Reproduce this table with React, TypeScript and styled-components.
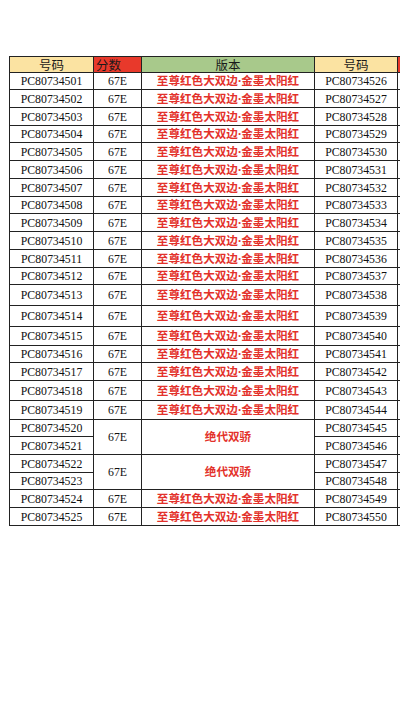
import styled, { createGlobalStyle } from "styled-components";

const Global = createGlobalStyle`
  html, body { margin: 0; padding: 0; background: #ffffff; overflow: hidden; }
  body { width: 400px; height: 711px; }
`;

const Page = styled.div`
  width: 400px;
  height: 711px;
  overflow: hidden;
  padding: 56px 0 0 9px;
  box-sizing: border-box;
`;

const Sheet = styled.table`
  border-collapse: collapse;
  table-layout: fixed;
  width: 450px;
  border: 1.5px solid #222;
`;

const Head = styled.th<{ $bg: string; $left?: boolean }>`
  background: ${(p) => p.$bg};
  border: 1px solid #222;
  height: 15px;
  padding: 0 2px;
  font-family: "Noto Sans CJK SC", "Noto Sans", sans-serif;
  font-weight: 400;
  font-size: 12.5px;
  line-height: 15px;
  color: #1a1a1a;
  text-align: ${(p) => (p.$left ? "left" : "center")};
`;

const Cell = styled.td<{ $h: number }>`
  border: 1px solid #222;
  height: ${(p) => p.$h}px;
  padding: 0;
  text-align: center;
  font-family: "Liberation Serif", "Times New Roman", serif;
  font-size: 11.8px;
  line-height: 14px;
  color: #111;
  white-space: nowrap;
  overflow: hidden;
`;

const Version = styled(Cell)`
  font-family: "Noto Sans", "Noto Sans CJK SC", sans-serif;
  font-weight: 700;
  font-size: 11.6px;
  color: #e3312b;
`;

const CREAM = "#fbe3a2";
const RED = "#e8392b";
const GREEN = "#a8c98b";

const NAME = "至尊红色大双边·金墨太阳红";
const PAIR = "绝代双骄";

// row heights measured from the sheet (content height, border excluded)
const heights = [
  16, 17, 17, 16, 17, 17, 17, 16, 17, 17, 17, 16, 20, 20, 18, 16, 17, 19, 18, 16, 17,
  17, 16, 17, 17,
];

type Row = { h: number; left: number; right: number; kind: "name" | "pairTop" | "pairBottom" };

const rows: Row[] = heights.map((h, i) => {
  const n = i + 1;
  let kind: Row["kind"] = "name";
  if (n === 20 || n === 22) kind = "pairTop";
  if (n === 21 || n === 23) kind = "pairBottom";
  return { h, left: 34500 + n, right: 34525 + n, kind };
});

export default function App() {
  return (
    <>
      <Global />
      <Page>
        <Sheet>
          <colgroup>
            <col style={{ width: 84 }} />
            <col style={{ width: 48 }} />
            <col style={{ width: 173 }} />
            <col style={{ width: 83 }} />
            <col style={{ width: 62 }} />
          </colgroup>
          <thead>
            <tr>
              <Head $bg={CREAM}>号码</Head>
              <Head $bg={RED} $left>分数</Head>
              <Head $bg={GREEN}>版本</Head>
              <Head $bg={CREAM}>号码</Head>
              <Head $bg={RED}></Head>
            </tr>
          </thead>
          <tbody>
            {rows.map((r) => (
              <tr key={r.left}>
                <Cell $h={r.h}>PC807{r.left}</Cell>
                {r.kind === "name" && <Cell $h={r.h}>67E</Cell>}
                {r.kind === "name" && <Version $h={r.h}>{NAME}</Version>}
                {r.kind === "pairTop" && (
                  <Cell $h={r.h} rowSpan={2}>
                    67E
                  </Cell>
                )}
                {r.kind === "pairTop" && (
                  <Version $h={r.h} rowSpan={2}>
                    {PAIR}
                  </Version>
                )}
                <Cell $h={r.h}>PC807{r.right}</Cell>
                <Cell $h={r.h}></Cell>
              </tr>
            ))}
          </tbody>
        </Sheet>
      </Page>
    </>
  );
}
